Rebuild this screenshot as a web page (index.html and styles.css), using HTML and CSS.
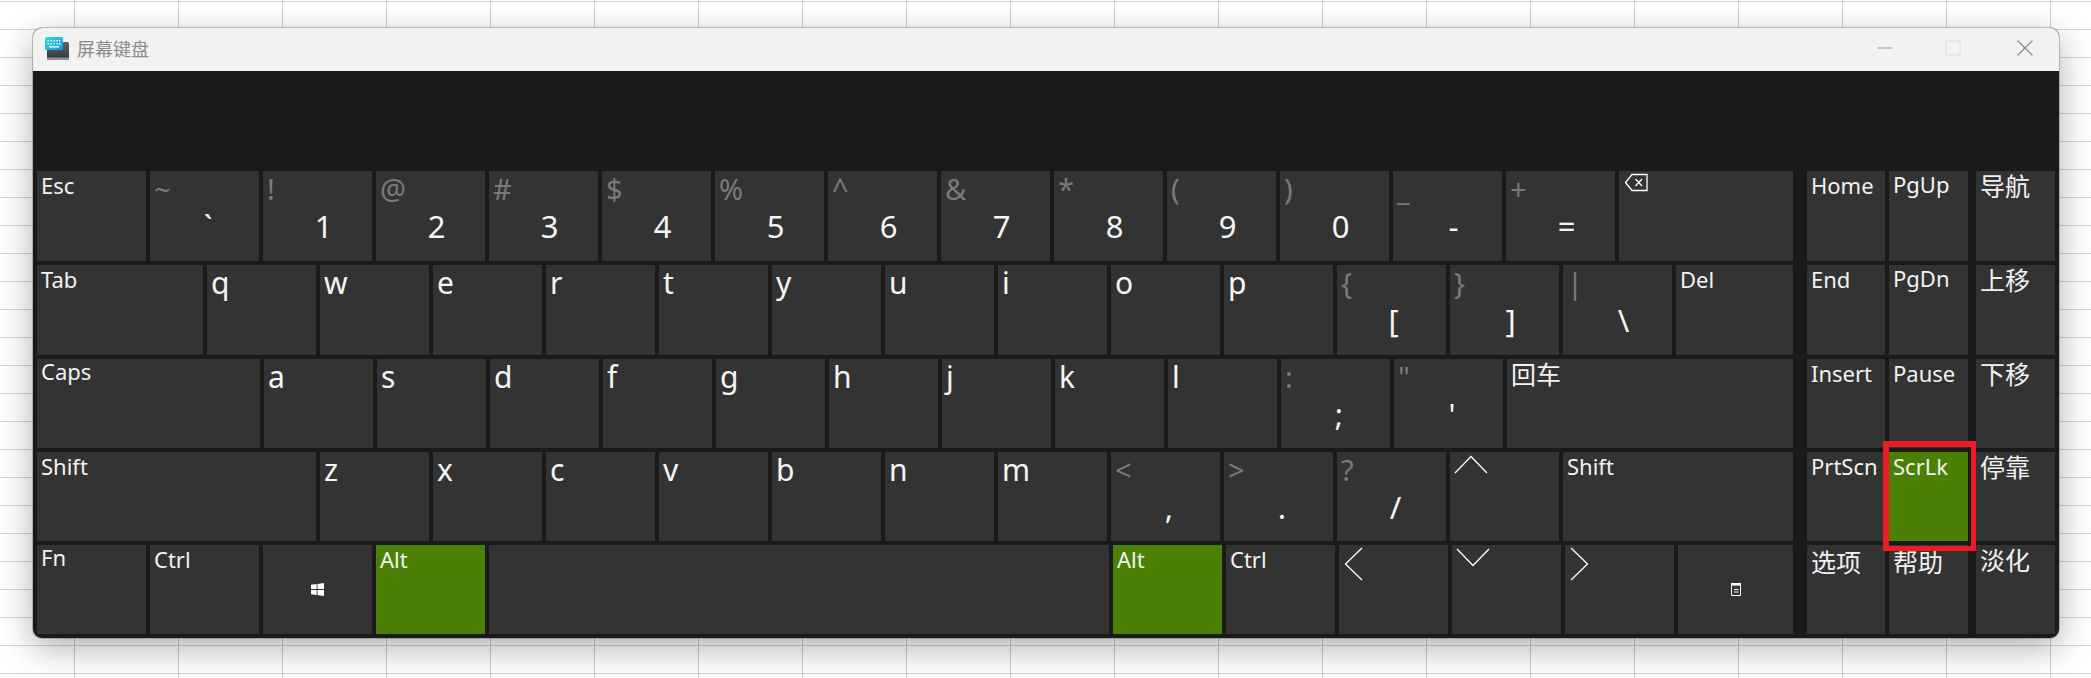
FILE: index.html
```html
<!DOCTYPE html>
<html lang="zh">
<head>
<meta charset="utf-8">
<title>屏幕键盘</title>
<link rel="stylesheet" href="styles.css">
</head>
<body>
<div class="window">
  <header class="titlebar">
    <svg class="logo" width="24" height="23" viewBox="0 0 24 23">
      <defs>
        <linearGradient id="lg1" x1="0" y1="0" x2="0" y2="1"><stop offset="0" stop-color="#5f636b"/><stop offset="1" stop-color="#33363b"/></linearGradient>
        <linearGradient id="lg2" x1="0" y1="0" x2="1" y2="1"><stop offset="0" stop-color="#2fdccf"/><stop offset="1" stop-color="#1a96e6"/></linearGradient>
      </defs>
      <rect x="2" y="5" width="22" height="18" rx="1.5" fill="url(#lg1)"/>
      <rect x="2" y="20.5" width="22" height="2.5" fill="#8d9096"/>
      <rect x="0" y="0" width="18" height="13" rx="1.5" fill="url(#lg2)"/>
      <path d="M2.500 3h1.400v1.400H2.500zM5.500 3h1.400v1.400H5.500zM8.500 3h1.400v1.400H8.500zM11.500 3h1.400v1.400h-1.400zM14 3h1.400v1.400H14zM2.500 6h1.400v1.400H2.500zM5.500 6h1.400v1.400H5.500zM8.500 6h1.400v1.400H8.500zM11.500 6h1.400v1.400h-1.400zM14 6h1.400v1.400H14zM4 9.300h10v1.300H4z" fill="#fff"/>
    </svg>
    <span class="title">屏幕键盘</span>
    <div class="controls">
      <svg class="ctl" width="16" height="16" viewBox="0 0 16 16"><path d="M0.500 8h15" stroke="#999" stroke-width="1" fill="none"/></svg>
      <svg class="ctl ctl-max" width="16" height="16" viewBox="0 0 16 16"><rect x="1" y="1" width="14" height="14" rx="1.500" stroke="#dcdcdc" stroke-width="1" fill="none"/></svg>
      <svg class="ctl ctl-close" width="16" height="16" viewBox="0 0 16 16"><path d="M0.500 0.500l15 15M15.500 0.500l-15 15" stroke="#888" stroke-width="1.100" fill="none"/></svg>
    </div>
  </header>
  <div class="body">
    <div class="display"></div>
    <div class="boards">
      <div class="main">
        <div class="row">
          <div class="k"><span class="lbl">Esc</span></div>
          <div class="k"><span class="sym">~</span><span class="ch ch-l">`</span></div>
          <div class="k"><span class="sym">!</span><span class="ch">1</span></div>
          <div class="k"><span class="sym">@</span><span class="ch">2</span></div>
          <div class="k"><span class="sym">#</span><span class="ch">3</span></div>
          <div class="k"><span class="sym">$</span><span class="ch">4</span></div>
          <div class="k"><span class="sym">%</span><span class="ch">5</span></div>
          <div class="k"><span class="sym">^</span><span class="ch">6</span></div>
          <div class="k"><span class="sym">&amp;</span><span class="ch">7</span></div>
          <div class="k"><span class="sym">*</span><span class="ch">8</span></div>
          <div class="k"><span class="sym">(</span><span class="ch">9</span></div>
          <div class="k"><span class="sym">)</span><span class="ch">0</span></div>
          <div class="k"><span class="sym">_</span><span class="ch">-</span></div>
          <div class="k"><span class="sym">+</span><span class="ch">=</span></div>
          <div class="k w-bksp">
            <svg class="bksp" width="24" height="19" viewBox="0 0 24 19"><path d="M23 1.500H8L1.500 9.500 8 17.500h15zM11.500 6l6.500 7M18 6l-6.500 7" stroke="#fff" stroke-width="1.300" fill="none"/></svg>
          </div>
        </div>
        <div class="row">
          <div class="k w-tab"><span class="lbl">Tab</span></div>
          <div class="k"><span class="let">q</span></div>
          <div class="k"><span class="let">w</span></div>
          <div class="k"><span class="let">e</span></div>
          <div class="k"><span class="let">r</span></div>
          <div class="k"><span class="let">t</span></div>
          <div class="k"><span class="let">y</span></div>
          <div class="k"><span class="let">u</span></div>
          <div class="k"><span class="let">i</span></div>
          <div class="k"><span class="let">o</span></div>
          <div class="k"><span class="let">p</span></div>
          <div class="k"><span class="sym">{</span><span class="ch ch-xl">[</span></div>
          <div class="k"><span class="sym">}</span><span class="ch">]</span></div>
          <div class="k"><span class="sym">|</span><span class="ch">\</span></div>
          <div class="k w-del"><span class="lbl">Del</span></div>
        </div>
        <div class="row">
          <div class="k w-caps"><span class="lbl lbl-up2">Caps</span></div>
          <div class="k"><span class="let">a</span></div>
          <div class="k"><span class="let">s</span></div>
          <div class="k"><span class="let">d</span></div>
          <div class="k"><span class="let">f</span></div>
          <div class="k"><span class="let">g</span></div>
          <div class="k"><span class="let">h</span></div>
          <div class="k"><span class="let">j</span></div>
          <div class="k"><span class="let">k</span></div>
          <div class="k"><span class="let">l</span></div>
          <div class="k"><span class="sym">:</span><span class="ch ch-l">;</span></div>
          <div class="k"><span class="sym">"</span><span class="ch ch-l">'</span></div>
          <div class="k grow"><span class="lbl cjk">回车</span></div>
        </div>
        <div class="row">
          <div class="k w-shift"><span class="lbl">Shift</span></div>
          <div class="k"><span class="let">z</span></div>
          <div class="k"><span class="let">x</span></div>
          <div class="k"><span class="let">c</span></div>
          <div class="k"><span class="let">v</span></div>
          <div class="k"><span class="let">b</span></div>
          <div class="k"><span class="let">n</span></div>
          <div class="k"><span class="let">m</span></div>
          <div class="k"><span class="sym">&lt;</span><span class="ch ch-l">,</span></div>
          <div class="k"><span class="sym">&gt;</span><span class="ch ch-l">.</span></div>
          <div class="k"><span class="sym">?</span><span class="ch ch-slash">/</span></div>
          <div class="k">
            <svg class="arrow arrow-up" width="34" height="19" viewBox="0 0 34 19"><path d="M1 18L17 1.500 33 18" stroke="#fff" stroke-width="1.300" fill="none"/></svg>
          </div>
          <div class="k grow"><span class="lbl">Shift</span></div>
        </div>
        <div class="row">
          <div class="k"><span class="lbl lbl-up2">Fn</span></div>
          <div class="k"><span class="lbl">Ctrl</span></div>
          <div class="k k-center">
            <svg width="13" height="13" viewBox="0 0 13 13"><path d="M0 1.800L5.700 1v5.100H0zM6.500 0.900L13 0v6.100H6.500zM0 6.900h5.700V12L0 11.200zM6.500 6.900H13V13l-6.500-0.900z" fill="#fff"/></svg>
          </div>
          <div class="k on"><span class="lbl">Alt</span></div>
          <div class="k w-space"></div>
          <div class="k on"><span class="lbl">Alt</span></div>
          <div class="k"><span class="lbl">Ctrl</span></div>
          <div class="k">
            <svg class="arrow arrow-left" width="19" height="34" viewBox="0 0 19 34"><path d="M18 1L1.500 17 18 33" stroke="#fff" stroke-width="1.300" fill="none"/></svg>
          </div>
          <div class="k">
            <svg class="arrow arrow-down" width="34" height="19" viewBox="0 0 34 19"><path d="M1 1l16 16.500L33 1" stroke="#fff" stroke-width="1.300" fill="none"/></svg>
          </div>
          <div class="k">
            <svg class="arrow arrow-right" width="19" height="34" viewBox="0 0 19 34"><path d="M1 1l16.500 16L1 33" stroke="#fff" stroke-width="1.300" fill="none"/></svg>
          </div>
          <div class="k grow k-center">
            <svg width="10" height="13" viewBox="0 0 10 13"><path d="M0.500 0.500h9v12h-9zM3 6.500h4.500M3 9h4.500" stroke="#fff" stroke-width="1" fill="none"/><path d="M0 0h10v2.600H0z" fill="#fff"/></svg>
          </div>
        </div>
      </div>
      <div class="nav">
        <div class="k"><span class="lbl">Home</span></div>
        <div class="k"><span class="lbl lbl-up">PgUp</span></div>
        <div class="k"><span class="lbl cjk">导航</span></div>
        <div class="k"><span class="lbl">End</span></div>
        <div class="k"><span class="lbl lbl-up">PgDn</span></div>
        <div class="k"><span class="lbl cjk">上移</span></div>
        <div class="k"><span class="lbl">Insert</span></div>
        <div class="k"><span class="lbl">Pause</span></div>
        <div class="k"><span class="lbl cjk">下移</span></div>
        <div class="k"><span class="lbl">PrtScn</span></div>
        <div class="k on marked"><span class="lbl">ScrLk</span></div>
        <div class="k"><span class="lbl cjk">停靠</span></div>
        <div class="k"><span class="lbl cjk cjk-low">选项</span></div>
        <div class="k"><span class="lbl cjk cjk-low">帮助</span></div>
        <div class="k"><span class="lbl cjk">淡化</span></div>
      </div>
    </div>
  </div>
</div>
</body>
</html>
```
FILE: styles.css
```css
* { box-sizing: border-box; }
html, body { margin: 0; height: 678px; overflow: hidden; }
body {
  padding: 28px 0 0 33px;
  background-color: #fff;
  background-image:
    repeating-linear-gradient(90deg, transparent 0 74px, #cfcfcf 74px 75px, transparent 75px 104px),
    repeating-linear-gradient(180deg, transparent 0 1px, #d4d4d4 1px 2px, transparent 2px 28px);
  font-family: "Noto Sans", "Noto Sans CJK SC", sans-serif;
}
.window {
  width: 2026px;
  height: 610px;
  display: flex;
  flex-direction: column;
  border-radius: 9px;
  overflow: hidden;
  background: #1a1a1a;
  box-shadow: 0 0 0 1px rgba(120,120,120,.45), 0 10px 34px rgba(0,0,0,.32);
}
.titlebar {
  height: 43px;
  flex: none;
  display: flex;
  align-items: center;
  background: #f2f2f2;
  padding-left: 12px;
}
.logo { margin-top: -2px; }
.title {
  margin-left: 8px;
  margin-top: -3px;
  font: 18px "Noto Sans CJK SC", sans-serif;
  color: #8c8c8c;
}
.controls {
  margin-left: auto;
  display: flex;
  align-items: center;
  margin-top: -3px;
  padding-right: 26px;
}
.ctl-max { margin-left: 52px; }
.ctl-close { margin-left: 56px; }
.body { flex: 1; display: flex; flex-direction: column; padding: 0 4px; }
.display { height: 100px; flex: none; }
.boards { display: flex; gap: 14px; }
.main {
  width: 1756px;
  display: grid;
  grid-template-rows: 90px 90px 89px 89px 89px;
  gap: 4px;
}
.row { display: flex; gap: 4px; }
.nav {
  display: grid;
  grid-template-columns: 78px 79px 79px;
  grid-template-rows: 90px 90px 89px 89px 89px;
  gap: 4px;
  width: 248px;
}
.nav .k:nth-child(3n) { margin-left: 4px; width: 79px; }
.k {
  position: relative;
  width: 109px;
  flex: none;
  background: #333;
  color: #f2f2f2;
  padding: 0 0 0 4px;
}
.nav .k { width: auto; }
.grow { flex: 1; width: auto; }
.w-bksp { width: 174px; }
.w-tab { width: 166px; }
.w-del { width: 117px; }
.w-caps { width: 223px; }
.w-shift { width: 279px; }
.w-space { width: 620px; }
.k-center { display: flex; align-items: center; justify-content: center; padding: 0; }
.on { background: #4b8004; }
.lbl {
  display: block;
  font-size: 22px;
  line-height: 30px;
  margin-top: -1px;
}
.lbl-up { margin-top: -2px; }
.lbl-up2 { margin-top: -3px; }
.cjk { font: 25px/32px "Noto Sans CJK SC", sans-serif; margin-top: -2px; }
.cjk-low { margin-top: 0; }
.sym {
  display: block;
  font-size: 29px;
  line-height: 36px;
  color: #7a7a7a;
}
.ch {
  display: block;
  text-align: center;
  font-size: 31px;
  line-height: 38px;
  color: #f5f5f5;
  padding-left: 8px;
}
.ch-l { padding-left: 3px; }
.ch-xl { padding-left: 0; }
.ch-slash { padding-left: 4px; }
.let {
  display: block;
  font-size: 30px;
  line-height: 38px;
  margin-top: -1px;
  color: #f5f5f5;
}
.bksp { display: block; margin: 2px 0 0 1px; }
.arrow { display: block; }
.arrow-up { margin-top: 3px; }
.arrow-left { margin: 2px 0 0 1px; }
.arrow-down { margin-top: 3px; }
.arrow-right { margin: 2px 0 0 1px; }
.marked { z-index: 1; }
.marked::after {
  content: "";
  position: absolute;
  left: -6px;
  right: -8px;
  top: -11px;
  bottom: -10px;
  border-style: solid;
  border-color: #ed1c24;
  border-width: 6px 5px 5px 6px;
  pointer-events: none;
}
```
